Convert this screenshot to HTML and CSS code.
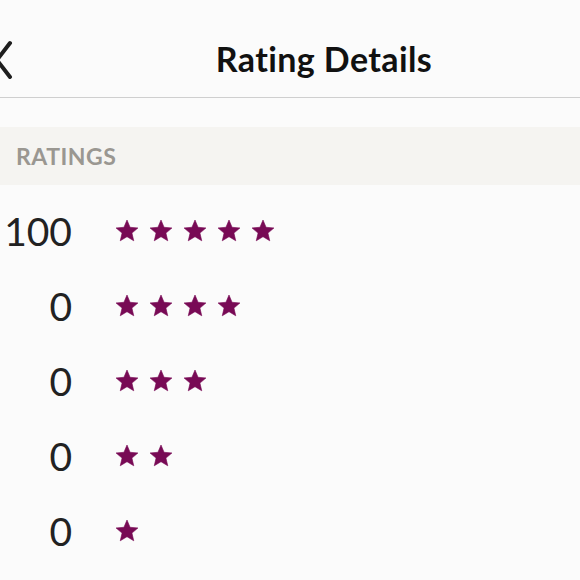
FILE: index.html
```html
<!DOCTYPE html>
<html>
<head>
<meta charset="utf-8">
<link rel="stylesheet" href="styles.css">
</head>
<body>
<header class="topbar">
  <a class="back" aria-label="Back">
    <svg width="20" height="40" viewBox="0 0 20 40"><polyline points="10,4 -3,21 10,38" fill="none" stroke="#1e1e1e" stroke-width="4" stroke-linecap="round" stroke-linejoin="round"/></svg>
  </a>
  <h1 class="title">Rating Details</h1>
</header>
<div class="spacer"></div>
<section class="section-head">RATINGS</section>
<ul class="ratings">
  <li class="row"><span class="count">100</span><span class="stars" data-n="5"></span></li>
  <li class="row"><span class="count">0</span><span class="stars" data-n="4"></span></li>
  <li class="row"><span class="count">0</span><span class="stars" data-n="3"></span></li>
  <li class="row"><span class="count">0</span><span class="stars" data-n="2"></span></li>
  <li class="row"><span class="count">0</span><span class="stars" data-n="1"></span></li>
</ul>
<script>
document.querySelectorAll('.stars').forEach(function(el){
  var n = +el.dataset.n, h = '';
  for (var i=0;i<n;i++) h += '<svg class="star" width="24" height="23" viewBox="0 0 24 23"><path d="M12 1L15.06 8.29L22.94 8.95L16.95 14.11L18.76 21.8L12 17.7L5.24 21.8L7.05 14.11L1.06 8.95L8.94 8.29Z" fill="#780a55" stroke="#780a55" stroke-width="0.6" stroke-linejoin="round"/></svg>';
  el.innerHTML = h;
});
</script>
</body>
</html>
```
FILE: styles.css
```css
html, body {
  margin: 0;
  padding: 0;
  background: #fbfbfb;
  font-family: Lato, "Noto Sans", sans-serif;
  color: #222;
}
.topbar {
  height: 97px;
  border-bottom: 1px solid #cfcfcf;
  display: flex;
  align-items: center;
}
.back {
  width: 68px;
  height: 97px;
  display: flex;
  align-items: center;
  flex: none;
}
.back svg { display: block; margin-top: 21px; }
.title {
  flex: 1;
  margin: 20px 0 0 0;
  text-align: center;
  font-size: 34px;
  font-weight: 700;
  letter-spacing: 0.4px;
  color: #111;
}
.spacer { height: 29px; }
.section-head {
  height: 58px;
  background: #f5f4f1;
  display: flex;
  align-items: center;
  padding-left: 16px;
  font-size: 23px;
  font-weight: 700;
  letter-spacing: 0.5px;
  color: #9a9791;
}
.ratings {
  list-style: none;
  margin: 0;
  padding: 8px 0 0 0;
}
.row {
  height: 75px;
  display: flex;
  align-items: center;
}
.count {
  width: 72px;
  text-align: right;
  font-size: 39px;
  font-weight: 400;
  color: #222;
  flex: none;
}
.stars {
  display: flex;
  gap: 10px;
  margin-left: 43px;
}
.star { display: block; }
```
